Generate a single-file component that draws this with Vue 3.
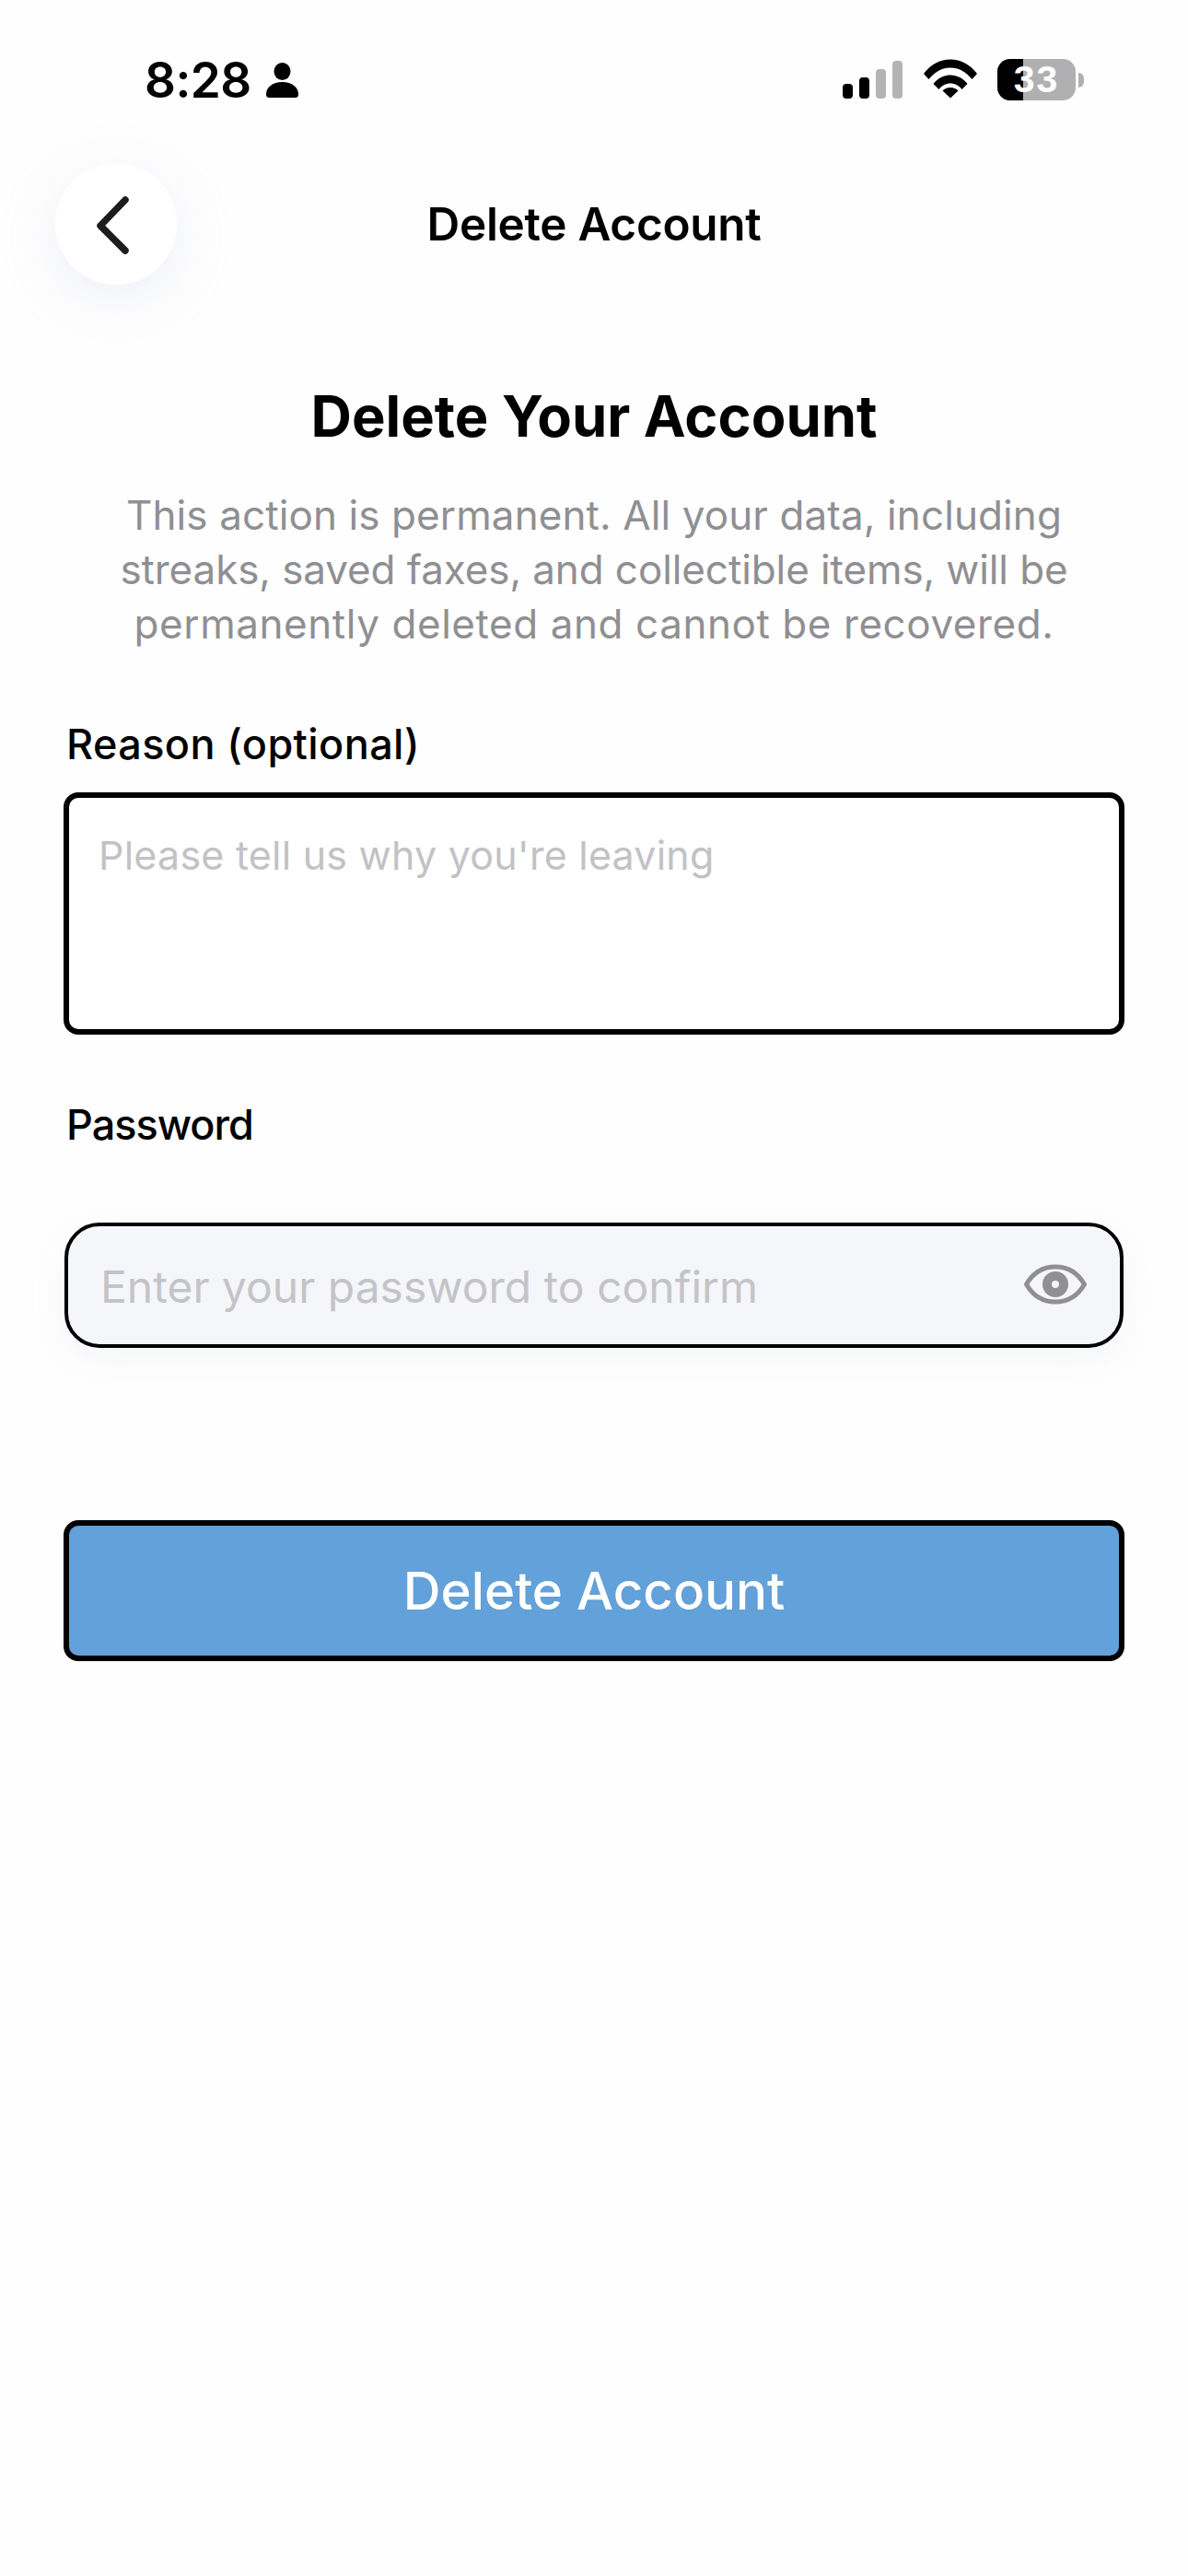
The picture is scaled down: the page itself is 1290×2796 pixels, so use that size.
<script setup>
const paragraph = [
  { text: 'This action is permanent. All your data, including', spacing: 0.1 },
  { text: 'streaks, saved faxes, and collectible items, will be', spacing: -0.1 },
  { text: 'permanently deleted and cannot be recovered.', spacing: 0.56 },
]
const bars = [
  { h: 16, on: true },
  { h: 23, on: true },
  { h: 32, on: false },
  { h: 41, on: false },
]
</script>

<template>
  <div class="screen">
    <div class="status">
      <div class="status-left">
        <span class="time">8:28</span>
        <svg class="person" viewBox="0 0 35 38" aria-hidden="true">
          <ellipse cx="17.5" cy="9.5" rx="9" ry="9.5" />
          <path d="M0 34C0 27 7 21 17.5 21S35 27 35 34C35 37 34 38 31 38H4C1 38 0 37 0 34Z" />
        </svg>
      </div>
      <div class="status-right">
        <div class="signal">
          <i v-for="(b, n) in bars" :key="n" :class="{ off: !b.on }" :style="{ height: b.h + 'px' }"></i>
        </div>
        <svg class="wifi" viewBox="0 0 58 42" aria-hidden="true">
          <path d="M0 15.5C7.500 5.500 18 0 29 0S50.500 5.500 58 15.500L52.500 21.500C46 13.500 38 9 29 9S12 13.500 5.500 21.500Z" />
          <path d="M10.500 26.500C15 20.500 22 17 29 17S43 20.500 47.500 26.500L41.500 32.500C38.500 28.500 34 26 29 26S19.500 28.500 16.500 32.500Z" />
          <path d="M20.500 34C22.500 31.800 25.500 30.500 29 30.500S35.500 31.800 37.500 34L29 42Z" />
        </svg>
        <div class="battery">
          <div class="battery-body"><span class="battery-fill"></span><span class="battery-text">33</span></div>
          <span class="battery-cap"></span>
        </div>
      </div>
    </div>

    <header class="header">
      <button class="back" aria-label="Back">
        <svg viewBox="0 0 40 64" aria-hidden="true">
          <path d="M35 5 8 33 35 60" />
        </svg>
      </button>
      <h1 class="header-title">Delete Account</h1>
    </header>

    <main class="content">
      <h2 class="title">Delete Your Account</h2>
      <p class="para">
        <span v-for="line in paragraph" :key="line.text" :style="{ letterSpacing: line.spacing + 'px' }">{{ line.text }}</span>
      </p>

      <label class="label reason-label">Reason (optional)</label>
      <div class="textarea">Please tell us why you're leaving</div>

      <label class="label password-label">Password</label>
      <div class="password">
        <span class="password-hint">Enter your password to confirm</span>
        <svg class="eye" viewBox="0 0 68 44" aria-hidden="true">
          <path class="eye-line" d="M2.500 22C10 9 21 3 34 3S58 9 65.500 22C58 35 47 41 34 41S10 35 2.500 22Z" />
          <circle class="eye-ball" cx="34" cy="22" r="9" />
        </svg>
      </div>

      <button class="submit">Delete Account</button>
    </main>
  </div>
</template>

<style scoped>
.screen {
  width: 1290px;
  height: 2796px;
  background: #fefefe;
  color: #000;
  font-family: Inter, "Noto Sans", sans-serif;
  overflow: hidden;
}
.status {
  height: 177px;
  box-sizing: border-box;
  padding: 64px 113px 0 157px;
  display: flex;
  justify-content: space-between;
  align-items: flex-start;
}
.status-left {
  display: flex;
  align-items: center;
  gap: 16px;
  height: 46px;
}
.time {
  font-size: 53px;
  font-weight: 600;
  line-height: 46px;
  letter-spacing: -0.5px;
}
.person {
  width: 35px;
  height: 38px;
  fill: #000;
}
.status-right {
  display: flex;
  align-items: flex-start;
}
.signal {
  display: flex;
  align-items: flex-end;
  gap: 7px;
  height: 43px;
  width: 65px;
  margin-right: 23px;
}
.signal i {
  display: block;
  width: 11px;
  border-radius: 4px;
  background: #000;
}
.signal i.off {
  background: #b4b4b6;
}
.wifi {
  width: 58px;
  height: 43px;
  fill: #000;
  margin-right: 22px;
}
.battery {
  display: flex;
  align-items: center;
  height: 45px;
}
.battery-body {
  position: relative;
  width: 85px;
  height: 45px;
  border-radius: 14px;
  background: #b0b0b2;
  overflow: hidden;
}
.battery-fill {
  position: absolute;
  left: 0;
  top: 0;
  bottom: 0;
  width: 28px;
  background: #000;
}
.battery-text {
  position: absolute;
  left: 0;
  right: 0;
  top: 0;
  text-align: center;
  color: #fff;
  font-family: "Liberation Sans", sans-serif;
  font-size: 41px;
  font-weight: 700;
  letter-spacing: 2px;
  line-height: 45px;
}
.battery-cap {
  width: 6px;
  height: 16px;
  margin-left: 3px;
  border-radius: 0 6px 6px 0;
  background: #b0b0b2;
}
.header {
  display: grid;
  grid-template-columns: 132px 1fr 132px;
  align-items: center;
  height: 132px;
  padding: 0 60px;
}
.back {
  width: 132px;
  height: 132px;
  padding: 0;
  border: 0;
  border-radius: 50%;
  background: #fff;
  box-shadow: 0 14px 60px rgba(190, 198, 225, 0.24);
  display: flex;
  align-items: center;
  justify-content: center;
}
.back svg {
  width: 40px;
  height: 64px;
  margin-left: -10px;
  margin-top: 1px;
}
.back path {
  fill: none;
  stroke: #1c1c1e;
  stroke-width: 7.5;
  stroke-linecap: round;
  stroke-linejoin: round;
}
.header-title {
  grid-column: 2;
  margin: 0;
  text-align: center;
  font-size: 49.5px;
  font-weight: 600;
  line-height: 60px;
  letter-spacing: -0.3px;
}
.content {
  display: flex;
  flex-direction: column;
  padding: 0 69px;
}
.title {
  margin: 113px 0 0;
  text-align: center;
  font-size: 61.5px;
  font-weight: 700;
  line-height: 60px;
}
.para {
  margin: 48px 0 0;
  text-align: center;
  color: #8f8f92;
  font-size: 44px;
  font-weight: 400;
  line-height: 59px;
}
.para span {
  display: block;
}
.label {
  display: block;
  font-size: 45px;
  font-weight: 500;
  line-height: 60px;
  padding-left: 3px;
}
.reason-label {
  margin-top: 71px;
  letter-spacing: 0.4px;
}
.textarea {
  margin-top: 22px;
  height: 263px;
  box-sizing: border-box;
  border: 6px solid #000;
  border-radius: 16px;
  background: #fff;
  padding: 36px 32px;
  color: #c2c2c5;
  font-size: 43px;
  letter-spacing: 0.22px;
  line-height: 52px;
}
.password-label {
  margin-top: 68px;
  letter-spacing: -1px;
}
.password {
  margin: 76px 1px 0;
  height: 136px;
  box-sizing: border-box;
  border: 4px solid #000;
  border-radius: 38px;
  background: #f5f6fa;
  box-shadow: 0 12px 36px rgba(190, 198, 225, 0.16);
  padding: 4px 36px 0 35px;
  display: flex;
  align-items: center;
  justify-content: space-between;
}
.password-hint {
  color: #c4c4c8;
  font-size: 48px;
  line-height: 60px;
}
.eye {
  width: 68px;
  height: 44px;
  margin-bottom: 6px;
}
.eye-line {
  fill: none;
  stroke: #909093;
  stroke-width: 5;
  stroke-linejoin: round;
}
.eye-ball {
  fill: #f5f6fa;
  stroke: #909093;
  stroke-width: 10;
}
.submit {
  margin-top: 187px;
  height: 153px;
  box-sizing: border-box;
  border: 6px solid #000;
  border-radius: 16px;
  background: #62a1d9;
  color: #fff;
  font-family: inherit;
  font-size: 56.5px;
  font-weight: 500;
  line-height: 60px;
}
</style>

<style>
html,
body {
  margin: 0;
  background: #fefefe;
}
</style>
